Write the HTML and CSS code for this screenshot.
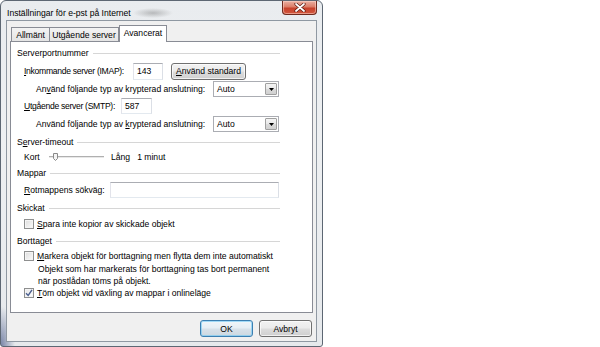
FILE: index.html
```html
<!DOCTYPE html>
<html lang="sv">
<head>
<meta charset="utf-8">
<title>Inställningar för e-pst på Internet</title>
<link rel="stylesheet" href="styles.css">
</head>
<body>
<div class="window">
  <div class="titlebar">
    <span class="title">Inställningar för e-pst på Internet</span>
    <div class="close">
      <svg width="12" height="9" viewBox="0 0 12 9"><path d="M2 1 L10 8 M10 1 L2 8" stroke="#5a1a10" stroke-width="3.2" stroke-linecap="round"/><path d="M2 1 L10 8 M10 1 L2 8" stroke="#fff" stroke-width="1.8" stroke-linecap="round"/></svg>
    </div>
  </div>
  <div class="client">
    <div class="tabs">
      <div class="tab tab-general">Allmänt</div>
      <div class="tab tab-out">Utgående server</div>
      <div class="tab tab-active">Avancerat</div>
    </div>
    <div class="panel">
      <div class="group-h gh-1"><span>Serverportnummer</span></div>
      <div class="row r-imap">
        <span class="label l-imap"><u>I</u>nkommande server (IMAP):</span>
        <div class="input in-imap">143</div>
        <div class="btn btn-std"><u>A</u>nvänd standard</div>
      </div>
      <div class="row r-enc1">
        <span class="label l-enc">An<u>v</u>änd följande typ av krypterad anslutning:</span>
        <div class="select"><span class="sel-text">Auto</span><span class="sel-btn"><svg width="5" height="3" viewBox="0 0 5 3"><path d="M0 0 H5 L2.5 3 Z" fill="#000"/></svg></span></div>
      </div>
      <div class="row r-smtp">
        <span class="label l-smtp"><u>U</u>tgående server (SMTP):</span>
        <div class="input in-smtp">587</div>
      </div>
      <div class="row r-enc2">
        <span class="label l-enc">Använd följande typ av <u>k</u>rypterad anslutning:</span>
        <div class="select"><span class="sel-text">Auto</span><span class="sel-btn"><svg width="5" height="3" viewBox="0 0 5 3"><path d="M0 0 H5 L2.5 3 Z" fill="#000"/></svg></span></div>
      </div>

      <div class="group-h gh-2"><span>S<u>e</u>rver-timeout</span></div>
      <div class="row r-slider">
        <span class="label l-kort">Kort</span>
        <div class="slider">
          <svg width="56" height="10" viewBox="0 0 56 10">
            <rect x="0" y="4" width="55" height="1" fill="#b0b0b0"/>
            <rect x="0" y="5" width="55" height="1" fill="#e8e8e8"/>
            <path d="M4.5 1.5 H8.5 V6.5 L6.5 8.5 L4.5 6.5 Z" fill="#f4f4f4" stroke="#8a8a8a" stroke-width="1"/>
          </svg>
        </div>
        <span class="label l-lang">Lång</span>
        <span class="label">1 minut</span>
      </div>

      <div class="group-h gh-3"><span>Mappar</span></div>
      <div class="row r-root">
        <span class="label l-root"><u>R</u>otmappens sökväg:</span>
        <div class="input in-root"></div>
      </div>

      <div class="group-h gh-4"><span>Skickat</span></div>
      <div class="row r-cb1">
        <span class="checkbox"></span>
        <span class="label"><u>S</u>para inte kopior av skickade objekt</span>
      </div>

      <div class="group-h gh-5"><span>Borttaget</span></div>
      <div class="row r-cb2">
        <span class="checkbox"></span>
        <span class="label"><u>M</u>arkera objekt för borttagning men flytta dem inte automatiskt</span>
      </div>
      <p class="note">Objekt som har markerats för borttagning tas bort permanent<br>när postlådan töms på objekt.</p>
      <div class="row r-cb3">
        <span class="checkbox checked"><svg width="8" height="8" viewBox="0 0 8 8"><path d="M1 4.2 L3.2 6.5 L7 0.8" fill="none" stroke="#4a5f8f" stroke-width="1.4"/></svg></span>
        <span class="label"><u>T</u>öm objekt vid växling av mappar i onlineläge</span>
      </div>
    </div>
    <div class="buttons">
      <div class="btn btn-dlg btn-default">OK</div>
      <div class="btn btn-dlg">Avbryt</div>
    </div>
  </div>
</div>
</body>
</html>
```
FILE: styles.css
```css
* { box-sizing: border-box; }
html, body { margin: 0; padding: 0; background: #fff; }
body {
  font-family: "Liberation Sans", Arial, sans-serif;
  font-size: 8.6px;
  color: #000;
  width: 600px;
  height: 347px;
  overflow: hidden;
}
u { text-decoration: underline; text-underline-offset: 1px; }

.window {
  width: 323px;
  height: 347px;
  border: 1px solid #5d6773;
  border-radius: 6px 6px 3px 3px;
  background:
    radial-gradient(ellipse 20px 5px at 152px 12px, rgba(90,90,90,0.35), rgba(90,90,90,0) 100%),
    radial-gradient(ellipse 14px 40px at 0px 345px, rgba(30,50,110,0.55), rgba(30,50,110,0) 100%),
    linear-gradient(#e9ecef, #eef0f2 40%, #e6e9ec);
  padding: 0 5px 4px 5px;
  display: flex;
  flex-direction: column;
}

.titlebar {
  height: 19px;
  display: flex;
  justify-content: space-between;
  align-items: flex-start;
}
.title {
  margin: 6px 0 0 1px;
  line-height: 12px;
}
.close {
  width: 35px;
  height: 14px;
  border: 1px solid #6e2a1e;
  border-top: none;
  border-radius: 0 0 4px 4px;
  background: linear-gradient(#eab0a2 0%, #dc7d68 45%, #c7412b 55%, #d2583f 100%);
  box-shadow: inset 0 0 0 1px rgba(255,220,210,0.5);
  display: flex;
  align-items: center;
  justify-content: center;
}

.client {
  flex: 1;
  border: 1px solid #8f98a2;
  background: #f0f0f0;
  padding: 4px 3px 0 3px;
  display: flex;
  flex-direction: column;
}

.tabs {
  height: 16px;
  display: flex;
  align-items: flex-end;
  margin-left: 1px;
}
.tab {
  height: 14px;
  border: 1px solid #898c95;
  border-bottom: none;
  background: linear-gradient(#f3f3f3, #e4e4e4);
  display: flex;
  align-items: center;
  justify-content: center;
  line-height: 12px;
  white-space: nowrap;
}
.tab-general { width: 39px; }
.tab-out { width: 69px; border-left: none; }
.tab-active {
  width: 48px;
  height: 17px;
  margin-bottom: -1px;
  background: #fff;
  position: relative;
  z-index: 1;
  padding-bottom: 2px;
}

.panel {
  height: 272px;
  border: 1px solid #898c95;
  background: #fff;
  padding: 4px 32px 0 6px;
  display: flex;
  flex-direction: column;
}

.group-h {
  height: 14px;
  display: flex;
  align-items: center;
  line-height: 12px;
}
.group-h::after {
  content: "";
  flex: 1;
  height: 1px;
  background: #d6d6d6;
  margin-left: 4px;
}
.gh-2 { margin-top: 2px; }
.gh-3 { margin-top: 2px; }
.gh-4 { margin-top: 2px; }
.gh-5 { margin-top: 3px; }

.row {
  display: flex;
  align-items: center;
  padding-left: 7px;
  line-height: 12px;
}
.label { white-space: nowrap; }
.r-imap { height: 18px; margin-top: 2px; }
.r-enc1, .r-enc2 { height: 18px; padding-left: 19px; }
.r-smtp { height: 16px; }
.r-enc2 { margin-top: 1px; }
.r-slider { height: 14px; margin-top: 1px; }
.r-root { height: 18px; margin-top: 1px; }
.r-cb1 { height: 14px; margin-top: 2px; }
.r-cb2 { height: 14px; margin-top: 1px; }
.r-cb3 { height: 12px; }

.l-imap { width: 109px; letter-spacing: -0.3px; }
.l-enc { width: 177px; }
.l-smtp { width: 97px; letter-spacing: -0.3px; }
.l-root { width: 86px; }
.l-kort { width: 25px; }
.l-lang { margin-left: 6px; margin-right: 7px; }

.input {
  height: 17px;
  border: 1px solid;
  border-color: #abadb3 #dbdfe6 #e3e9ef #e2e3ea;
  background: #fff;
  padding: 0 3px;
  display: flex;
  align-items: center;
}
.in-imap { width: 30px; }
.in-smtp { width: 31px; height: 16px; }
.in-root { width: 169px; height: 16px; }

.select {
  width: 66px;
  height: 16px;
  border: 1px solid #abadb3;
  background: #fff;
  display: flex;
  align-items: center;
  justify-content: space-between;
  padding: 0 1px 0 3px;
}
.sel-btn {
  width: 12px;
  height: 12px;
  border: 1px solid #a0a0a0;
  border-radius: 1px;
  background: linear-gradient(#f4f4f4, #e8e8e8 50%, #dadada 51%, #d0d0d0);
  display: flex;
  align-items: center;
  justify-content: center;
}

.slider { width: 56px; height: 10px; display: flex; }
.slider svg { display: block; }

.btn {
  border: 1px solid #707070;
  border-radius: 3px;
  background: linear-gradient(#f2f2f2 0%, #ebebeb 48%, #dddddd 52%, #cfcfcf 100%);
  box-shadow: inset 0 0 0 1px rgba(255,255,255,0.7);
  display: flex;
  align-items: center;
  justify-content: center;
  line-height: 12px;
  white-space: nowrap;
}
.btn-std { width: 75px; height: 17px; margin-left: 8px; }

.checkbox {
  width: 10px;
  height: 10px;
  border: 1px solid #8e8f8f;
  background: linear-gradient(135deg, #dcdcdc, #fbfbfb);
  box-shadow: inset 0 0 0 1px #f4f4f4;
  margin-right: 3px;
  display: flex;
  align-items: center;
  justify-content: center;
}
.checkbox.checked { background: linear-gradient(135deg, #e6e6e6, #ffffff); }

.note {
  margin: 0 0 0 21px;
  line-height: 12px;
  white-space: nowrap;
}

.buttons {
  display: flex;
  justify-content: flex-end;
  gap: 6px;
  margin-top: 7px;
  padding-right: 1px;
}
.btn-dlg { width: 53px; height: 17px; }
.btn-default {
  border-color: #3c7fb1;
  box-shadow: inset 0 0 0 1px rgba(110,200,245,0.6);
  background: linear-gradient(#f0f6fa 0%, #e6eef4 48%, #d8e2ea 52%, #cdd8e0 100%);
}
```
